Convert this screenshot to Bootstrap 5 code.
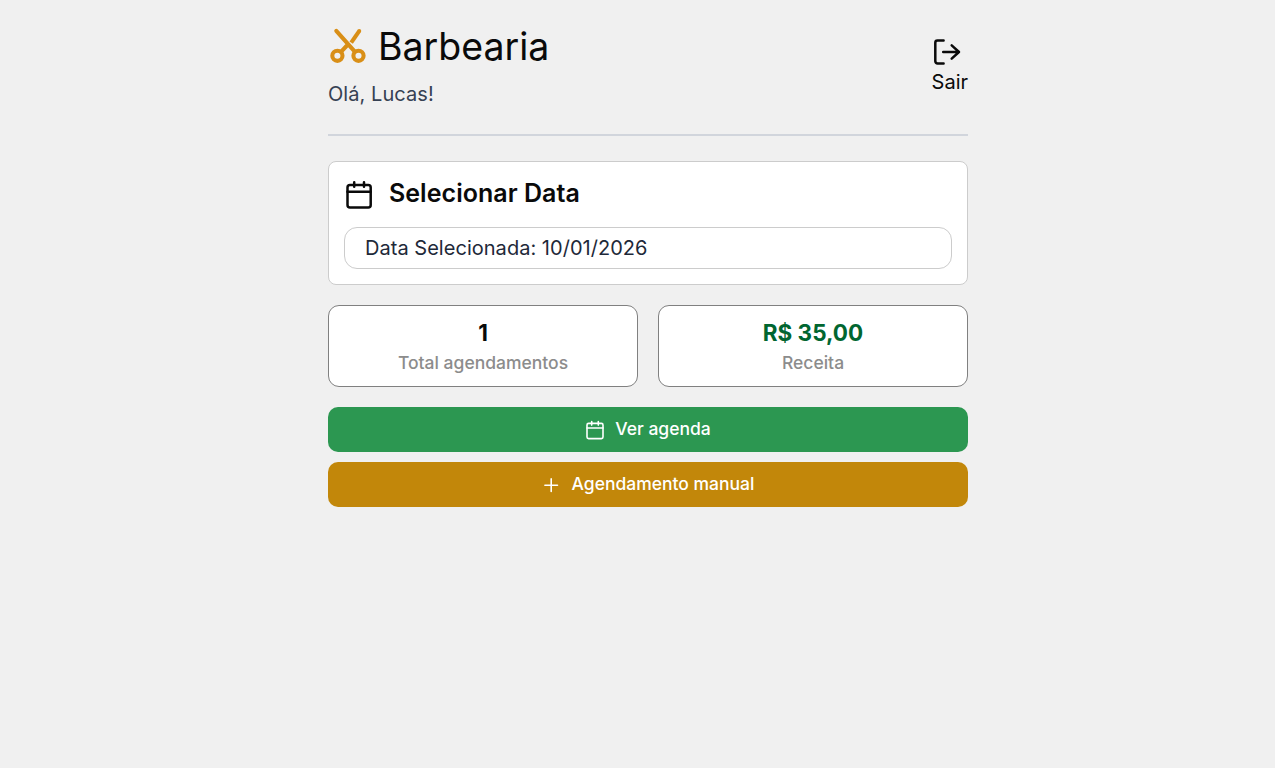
<!DOCTYPE html>
<html lang="pt-BR">
<head>
<meta charset="utf-8">
<meta name="viewport" content="width=device-width, initial-scale=1">
<title>Barbearia</title>
<link href="https://cdn.jsdelivr.net/npm/bootstrap@5.3.0/dist/css/bootstrap.min.css" rel="stylesheet">
<style>
body{background:#f0f0f0;color:#0a0a0a;font-family:Inter,sans-serif;font-size:20px;line-height:28px}
.page{width:640px;margin-left:328px;padding-top:20px}
svg{display:block;flex:none;fill:none;stroke:currentColor;stroke-linecap:round;stroke-linejoin:round}
.top-bar{height:116px;border-bottom:2px solid #d1d5dc;margin-bottom:25px}
.brand{font-size:37.5px;line-height:52px;font-weight:400}
.brand svg{color:#d98f17}
.brand span{padding-top:1px;margin-bottom:-1px}
.hello{color:#364153;margin-top:8px;letter-spacing:.06px}
.logout{color:#0a0a0a;margin-top:16px}
.panel{height:124px;border:1px solid #ccc;border-radius:8px;padding:15px}
.panel h2{font-size:25px;line-height:32px;font-weight:600;letter-spacing:.04px}
.date-box{height:42px;border:1px solid #ccc;border-radius:13px;padding:0 20px;line-height:40px;color:#1e2939;margin-top:18px;letter-spacing:.03px}
.stats{gap:20px;margin:20px 0}
.stat{flex:1 1 0;height:82px;border:1px solid #808080;border-radius:11px;padding-top:11px}
.stat strong{font-size:22.5px;line-height:32px;font-weight:700}
.stat span{font-size:17.5px;line-height:28px;font-weight:500;color:#8c8c8c}
.stat .income{color:#016630}
.actions,.action{gap:10px}
.action{height:45px;border:0;border-radius:10px;font-size:17.5px;font-weight:500;color:#fff;padding:0}
.action:hover{color:#fff}
.agenda{background:#2c9751}.manual{background:#c2870a}
</style>
</head>
<body>
<main class="page">
  <header class="top-bar d-flex justify-content-between">
    <div>
      <h1 class="brand d-flex align-items-center mb-0">
        <svg width="50" height="40" viewBox="0 0 50 40" stroke-width="4.1"><circle cx="9.4" cy="29.8" r="5.1"/><circle cx="30.5" cy="29.8" r="5.1"/><path d="M8.3 4.8 27 25.8"/><path d="M13 25.8l5.5-5.8"/><path stroke-linecap="butt" d="M31 5.4 23.2 16.6"/><path d="M31.2 5v0"/></svg>
        <span>Barbearia</span>
      </h1>
      <div class="hello">Olá, Lucas!</div>
    </div>
    <a href="#" class="logout text-decoration-none">
      <svg width="30" height="32" viewBox="0 0 30 32" stroke-width="2.5"><path d="M11.6 4.6H5.5a2.2 2.2 0 0 0-2.2 2.2v18.4a2.2 2.2 0 0 0 2.2 2.2h6.1M11.2 16H27M19.7 9.4l7.3 6.6-7.3 6.6"/></svg>
      <span>Sair</span>
    </a>
  </header>
  <section class="panel bg-white">
    <h2 class="d-flex align-items-center mb-0">
      <svg width="45" height="32" viewBox="0 0 45 32" stroke-width="2.5"><rect x="3.5" y="8.1" width="23.2" height="22.3" rx="2.5"/><path d="M3.5 14.8h23.2M10.2 5.3v4.4M20 5.3v4.4"/></svg>
      <span>Selecionar Data</span>
    </h2>
    <div class="date-box">Data Selecionada: 10/01/2026</div>
  </section>
  <section class="stats d-flex">
    <div class="stat bg-white d-flex flex-column align-items-center"><strong>1</strong><span>Total agendamentos</span></div>
    <div class="stat bg-white d-flex flex-column align-items-center"><strong class="income">R$ 35,00</strong><span>Receita</span></div>
  </section>
  <div class="actions d-grid">
    <button class="btn action agenda d-flex align-items-center justify-content-center"><svg width="20" height="20" viewBox="0 0 20 20" stroke-width="1.6"><rect x="2" y="3.4" width="16" height="15.2" rx="1.6"/><path d="M2 8h16M6.7 1.6v3.5M13.3 1.6v3.5"/></svg><span>Ver agenda</span></button>
    <button class="btn action manual d-flex align-items-center justify-content-center"><svg width="20" height="20" viewBox="0 0 20 20" stroke-width="1.6"><path d="M2.9 10.2h12.6M9.2 3.9v12.6"/></svg><span>Agendamento manual</span></button>
  </div>
</main>
<script src="https://cdn.jsdelivr.net/npm/bootstrap@5.3.0/dist/js/bootstrap.bundle.min.js"></script>
</body>
</html>
